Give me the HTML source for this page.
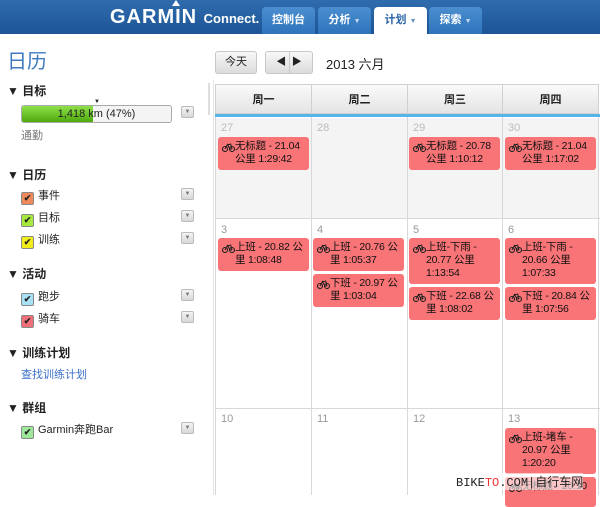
<!DOCTYPE html>
<html><head><meta charset="utf-8"><style>
*{margin:0;padding:0;box-sizing:border-box}
body{width:600px;height:495px;overflow:hidden;background:#fff;font-family:"Liberation Sans","Noto Sans CJK SC",sans-serif;font-size:11px;color:#222;position:relative}
.hdr{position:absolute;left:0;top:0;width:600px;height:34px;background:linear-gradient(#2f6cae,#1d5596)}
.logo{position:absolute;left:110px;top:6px;color:#fff;font-weight:bold;font-size:20px;letter-spacing:1px}
.logo span{font-size:13px;letter-spacing:0}
.tri{position:absolute;left:172px;top:0;width:0;height:0;border-left:4px solid transparent;border-right:4px solid transparent;border-bottom:6px solid #fff}
.tab{position:absolute;top:7px;height:27px;width:53px;border-radius:4px 4px 0 0;background:linear-gradient(#4b8fd0,#2e74bb);color:#fff;font-weight:bold;font-size:11px;text-align:center;line-height:26px}
.tab.on{background:#fff;color:#2a64a8}
.tab i{font-style:normal;font-size:7px;opacity:.7}
.abs{position:absolute}
h1{position:absolute;left:7px;top:45px;font-size:20px;font-weight:normal;color:#3f7ac0}
.sec{position:absolute;left:7px;font-weight:bold;font-size:12px}
.it{position:absolute;left:21px;font-size:11px}
.cb{display:inline-block;width:13px;height:13px;border:1px solid #888;border-radius:2px;vertical-align:-2px;margin-right:4px;font-size:9px;line-height:11px;text-align:center;font-weight:bold}
.dd{position:absolute;left:181px;width:13px;height:12px;background:linear-gradient(#f4f4f4,#d8d8d8);border:1px solid #bbb;border-radius:2px;font-size:6px;color:#777;text-align:center;line-height:10px}
.btn{position:absolute;top:51px;height:23px;background:linear-gradient(#f8f8f8,#dcdcdc);border:1px solid #c8c8c8;border-radius:3px;text-align:center;line-height:21px;font-size:11px}
.col{position:absolute;top:84px;height:411px;border-left:1px solid #d8d8d8}
.th{position:absolute;top:84px;height:30px;background:linear-gradient(#fafafa,#e4e4e4);border:1px solid #d0d0d0;text-align:center;font-weight:bold;line-height:30px;font-size:11px}
.ev{position:absolute;background:#f97477;border-radius:3px;font-size:10.5px;line-height:13px;padding:3px 2px 3px 17px;color:#111;letter-spacing:-0.2px}
.ev svg{position:absolute;left:4px;top:5px}
.dn{position:absolute;color:#999;font-size:11px}
</style></head><body>
<svg width="0" height="0" style="position:absolute"><defs><g id="bk" fill="none" stroke="#222" stroke-width="1.1"><circle cx="3" cy="7" r="2.5"/><circle cx="10" cy="7" r="2.5"/><path d="M3 7L5.5 2.5L8 7L10 7M5.5 2.5L8 2.5M8.5 1.5L10 7"/></g></defs></svg>
<div class="hdr"></div>
<div class="tri"></div>
<div class="logo">GARMIN <span>Connect.</span></div>
<div class="tab" style="left:262px">控制台</div>
<div class="tab" style="left:318px">分析 <i>▼</i></div>
<div class="tab on" style="left:374px">计划 <i>▼</i></div>
<div class="tab" style="left:429px">探索 <i>▼</i></div>

<h1>日历</h1>
<div class="sec" style="top:82px">▼ 目标</div>
<div class="abs" style="left:21px;top:105px;width:151px;height:18px;border:1px solid #aaa;border-radius:3px;background:#f4f4f4;overflow:hidden"><div style="width:71px;height:100%;background:linear-gradient(#8fe04a,#4ea90c)"></div><div class="abs" style="left:0;top:2px;width:100%;text-align:center;font-size:11px">1,418 km (47%)</div></div>
<div class="abs" style="left:94px;top:99px;font-size:6px">▼</div>
<div class="dd" style="top:106px">▼</div>
<div class="it" style="top:127px;color:#777">通勤</div>
<div class="sec" style="top:166px">▼ 日历</div>
<div class="it" style="top:187px"><span class="cb" style="background:#f08a5d">✔</span>事件</div><div class="dd" style="top:188px">▼</div>
<div class="it" style="top:209px"><span class="cb" style="background:#a8e83c">✔</span>目标</div><div class="dd" style="top:210px">▼</div>
<div class="it" style="top:231px"><span class="cb" style="background:#f2ee1c">✔</span>训练</div><div class="dd" style="top:232px">▼</div>
<div class="sec" style="top:265px">▼ 活动</div>
<div class="it" style="top:288px"><span class="cb" style="background:#a8e0f4">✔</span>跑步</div><div class="dd" style="top:289px">▼</div>
<div class="it" style="top:310px"><span class="cb" style="background:#f0707a">✔</span>骑车</div><div class="dd" style="top:311px">▼</div>
<div class="sec" style="top:344px">▼ 训练计划</div>
<div class="it" style="top:366px;color:#3a6fc8">查找训练计划</div>
<div class="sec" style="top:399px">▼ 群组</div>
<div class="it" style="top:421px"><span class="cb" style="background:#9ee89a">✔</span>Garmin奔跑Bar</div><div class="dd" style="top:422px">▼</div>
<div class="abs" style="left:208px;top:83px;width:2px;height:32px;background:#ddd"></div>
<div class="abs" style="left:213px;top:80px;width:1px;height:415px;background:#e4e4e4"></div>

<div class="btn" style="left:215px;width:42px">今天</div>
<div class="btn" style="left:265px;width:48px;font-size:10px">◀ &nbsp;▶</div>
<div class="abs" style="top:52px;width:1px;height:21px;background:#c8c8c8;left:289px"></div>
<div class="abs" style="left:326px;top:54px;font-size:13px">2013 六月</div>

<div class="abs" style="left:215px;top:118px;width:383px;height:100px;background:#f4f4f4"></div>
<div class="col" style="left:215px"></div><div class="col" style="left:311px"></div><div class="col" style="left:407px"></div><div class="col" style="left:502px"></div><div class="col" style="left:598px"></div>
<div class="th" style="left:215px;width:97px">周一</div>
<div class="th" style="left:311px;width:97px">周二</div>
<div class="th" style="left:407px;width:96px">周三</div>
<div class="th" style="left:502px;width:97px">周四</div>
<div class="abs" style="left:215px;top:114px;width:385px;height:3px;background:#56b4e8"></div>
<div class="abs" style="left:215px;top:218px;width:385px;height:1px;background:#d8d8d8"></div>
<div class="abs" style="left:215px;top:408px;width:385px;height:1px;background:#d8d8d8"></div>

<div class="dn" style="left:221px;top:122px;color:#bbb">27</div>
<div class="dn" style="left:317px;top:122px;color:#bbb">28</div>
<div class="dn" style="left:413px;top:122px;color:#bbb">29</div>
<div class="dn" style="left:508px;top:122px;color:#bbb">30</div>
<div class="ev" style="left:218px;top:137px;width:91px;height:33px"><svg width="13" height="10"><use href="#bk"/></svg>无标题 - 21.04 公里 1:29:42</div>
<div class="ev" style="left:409px;top:137px;width:91px;height:33px"><svg width="13" height="10"><use href="#bk"/></svg>无标题 - 20.78 公里 1:10:12</div>
<div class="ev" style="left:505px;top:137px;width:91px;height:33px"><svg width="13" height="10"><use href="#bk"/></svg>无标题 - 21.04 公里 1:17:02</div>

<div class="dn" style="left:221px;top:224px">3</div>
<div class="dn" style="left:317px;top:224px">4</div>
<div class="dn" style="left:413px;top:224px">5</div>
<div class="dn" style="left:508px;top:224px">6</div>
<div class="ev" style="left:218px;top:238px;width:91px;height:33px"><svg width="13" height="10"><use href="#bk"/></svg>上班 - 20.82 公里 1:08:48</div>
<div class="ev" style="left:313px;top:238px;width:91px;height:33px"><svg width="13" height="10"><use href="#bk"/></svg>上班 - 20.76 公里 1:05:37</div>
<div class="ev" style="left:313px;top:274px;width:91px;height:33px"><svg width="13" height="10"><use href="#bk"/></svg>下班 - 20.97 公里 1:03:04</div>
<div class="ev" style="left:409px;top:238px;width:91px;height:46px"><svg width="13" height="10"><use href="#bk"/></svg>上班-下雨 - 20.77 公里 1:13:54</div>
<div class="ev" style="left:409px;top:287px;width:91px;height:33px"><svg width="13" height="10"><use href="#bk"/></svg>下班 - 22.68 公里 1:08:02</div>
<div class="ev" style="left:505px;top:238px;width:91px;height:46px"><svg width="13" height="10"><use href="#bk"/></svg>上班-下雨 - 20.66 公里 1:07:33</div>
<div class="ev" style="left:505px;top:287px;width:91px;height:33px"><svg width="13" height="10"><use href="#bk"/></svg>下班 - 20.84 公里 1:07:56</div>

<div class="dn" style="left:221px;top:413px">10</div>
<div class="dn" style="left:317px;top:413px">11</div>
<div class="dn" style="left:413px;top:413px">12</div>
<div class="dn" style="left:508px;top:413px">13</div>
<div class="ev" style="left:505px;top:428px;width:91px;height:46px"><svg width="13" height="10"><use href="#bk"/></svg>上班-堵车 - 20.97 公里 1:20:20</div>
<div class="ev" style="left:505px;top:477px;width:91px;height:30px"><svg width="13" height="10"><use href="#bk"/></svg>无标题 - 20.10</div>
<div class="abs" style="left:456px;top:473px;font-family:'Liberation Mono','Noto Sans CJK SC',monospace;font-size:12px;color:#222;white-space:nowrap;background:rgba(255,255,255,.6)">BIKE<span style="color:#e33">TO</span>.COM|自行车网</div>
</body></html>
